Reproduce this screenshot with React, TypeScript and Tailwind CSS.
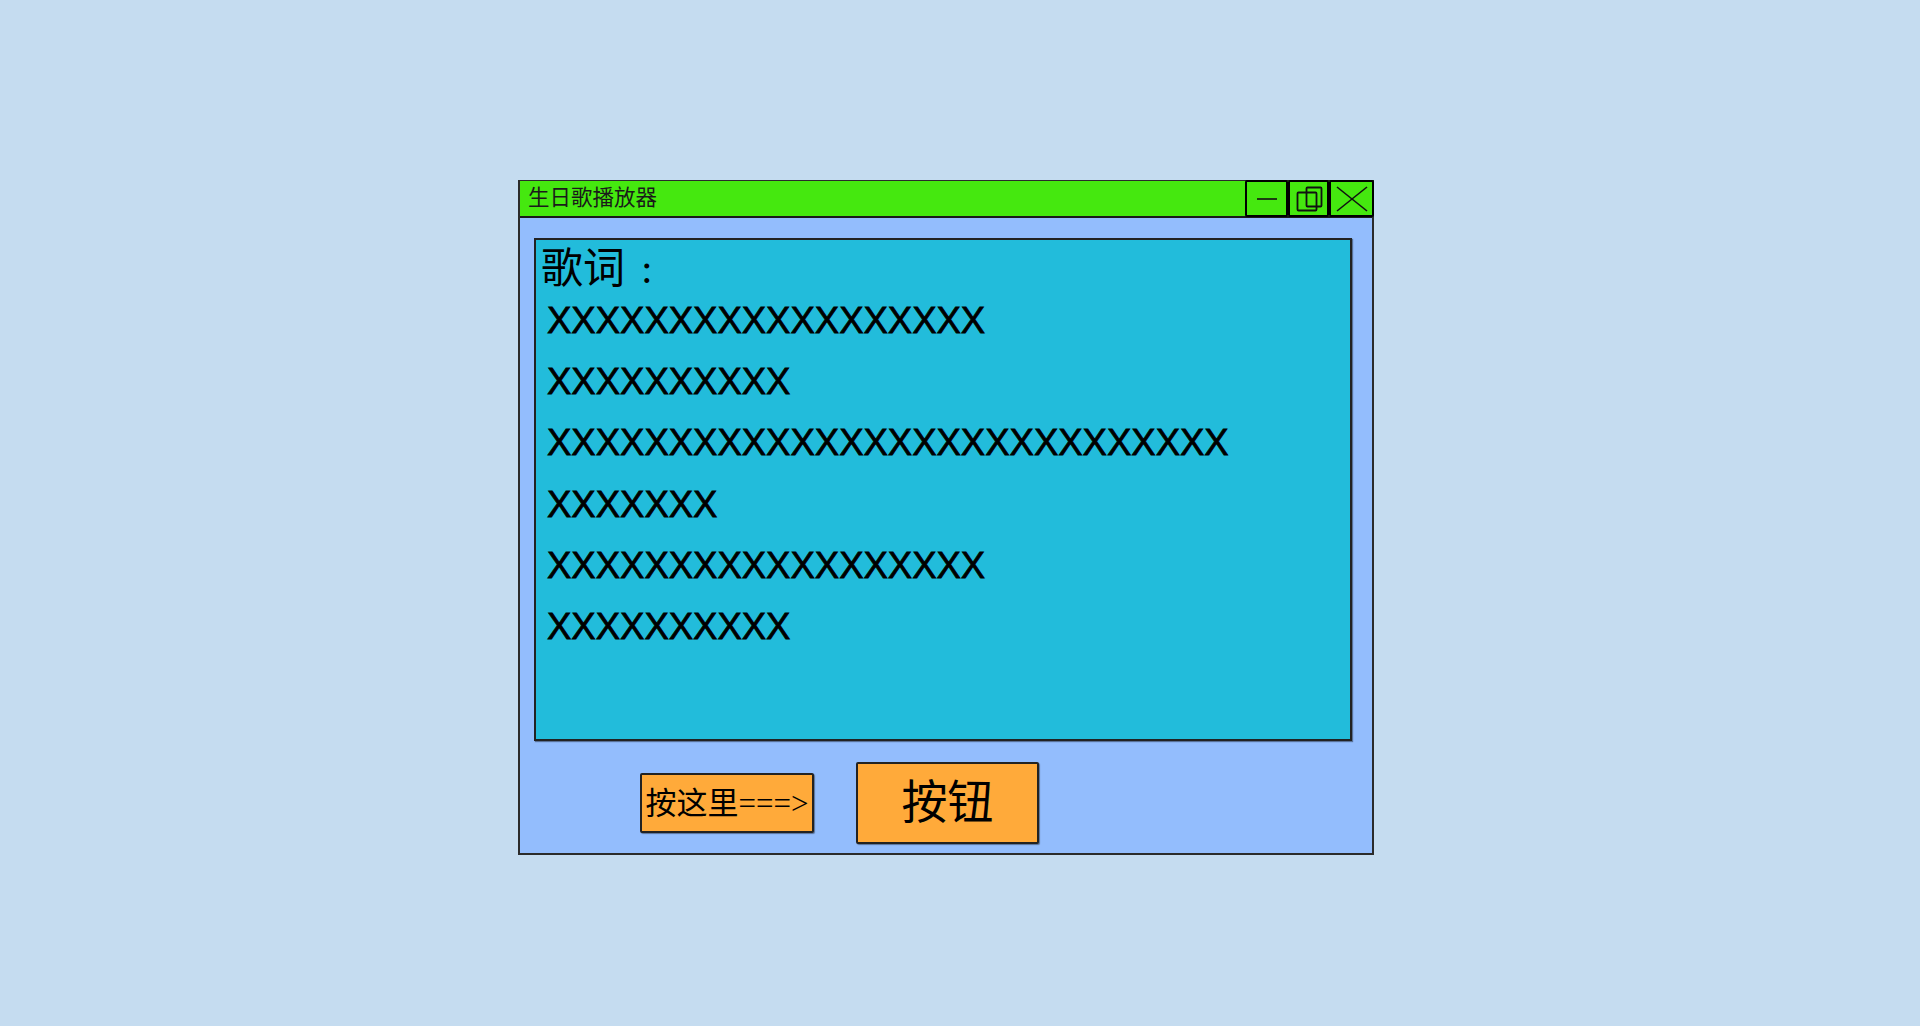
import React from 'react';

const lyrics = [
  'XXXXXXXXXXXXXXXXXX',
  'XXXXXXXXXX',
  'XXXXXXXXXXXXXXXXXXXXXXXXXXXX',
  'XXXXXXX',
  'XXXXXXXXXXXXXXXXXX',
  'XXXXXXXXXX',
];

const cjk = { fontFamily: '"Liberation Serif", "Noto Sans CJK SC", serif' };

function TitleButton({ children, className }: { children: React.ReactNode; className: string }) {
  return (
    <div className={`flex items-center justify-center h-[37px] border-2 border-black rounded-[2px] bg-[#45e80f] ${className}`}>
      {children}
    </div>
  );
}

export default function App() {
  return (
    <div className="min-h-[1026px] bg-[#c5dcf0] pt-[180px] pl-[518px]">
      <div className="w-[856px] h-[675px] border-2 border-[#2b2b2b] bg-[#93bdfd] flex flex-col">
        {/* title bar */}
        <div className="flex items-center h-[37px] -mt-[1px] bg-[#45e80f] border-b-2 border-[#1a1a1a]">
          <div className="flex-1 pl-[8px] text-[21.5px] text-[#1a1a1a] leading-none" style={cjk}>
            生日歌播放器
          </div>
          <TitleButton className="w-[43px]">
            <svg width="22" height="4" viewBox="0 0 22 4">
              <line x1="1" y1="2" x2="21" y2="2" stroke="#111" strokeWidth="1.6" />
            </svg>
          </TitleButton>
          <TitleButton className="w-[41px]">
            <svg width="30" height="30" viewBox="0 0 30 30">
              <rect x="12.5" y="3.5" width="15" height="19" rx="1" fill="none" stroke="#111" strokeWidth="1.8" />
              <rect x="3.5" y="8.5" width="19" height="18" rx="1" fill="none" stroke="#111" strokeWidth="1.8" />
            </svg>
          </TitleButton>
          <TitleButton className="w-[45px] -mr-[2px] border-[2.5px]">
            <svg width="34" height="28" viewBox="0 0 34 28">
              <line x1="2" y1="2" x2="32" y2="26" stroke="#111" strokeWidth="1.6" />
              <line x1="32" y1="2" x2="2" y2="26" stroke="#111" strokeWidth="1.6" />
            </svg>
          </TitleButton>
        </div>

        {/* lyrics panel */}
        <div className="ml-[14px] mt-[20px] w-[818px] h-[503px] border-2 border-[#222] bg-[#22bcdb] shadow-[1px_1px_1px_rgba(0,0,0,0.4)]">
          <div className="pl-[5px] h-[50px] text-[42px] leading-[58px] text-black whitespace-nowrap" style={cjk}>
            歌词<span className="ml-[16px]">:</span>
          </div>
          <div className="pl-[11px]">
            {lyrics.map((line, i) => (
              <div
                key={i}
                className="h-[61.2px] text-[36.5px] leading-[61.2px] text-black [-webkit-text-stroke:0.8px_black]"
                style={{ fontFamily: '"Liberation Sans", Arial, sans-serif' }}
              >
                {line}
              </div>
            ))}
          </div>
        </div>

        {/* buttons */}
        <div className="flex items-center mt-[21px] pl-[120px] gap-[42px]">
          <button
            className="w-[174px] h-[60px] flex items-center justify-center border-2 border-[#222] rounded-[2px] bg-[#ffaa3a] text-[31px] text-black leading-none whitespace-nowrap shadow-[1px_1px_1px_rgba(0,0,0,0.4)]"
            style={cjk}
          >
            按这里===&gt;
          </button>
          <button
            className="w-[183px] h-[82px] flex items-center justify-center border-2 border-[#222] rounded-[2px] bg-[#ffaa3a] text-[46px] text-black leading-none shadow-[1px_1px_1px_rgba(0,0,0,0.4)]"
            style={cjk}
          >
            按钮
          </button>
        </div>
      </div>
    </div>
  );
}
